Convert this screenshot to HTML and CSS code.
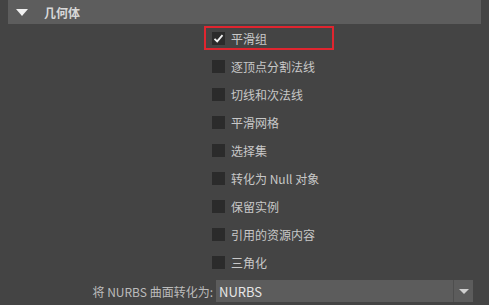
FILE: index.html
```html
<!DOCTYPE html>
<html lang="zh">
<head>
    <meta charset="UTF-8">
    <title>几何体</title>
    <link rel="stylesheet" href="styles.css">
</head>
<body>
    <div class="panel">
        <div class="section-header">
            <span class="arrow"></span>
            <span class="section-title">几何体</span>
        </div>

        <div class="options">
            <div class="option highlighted">
                <span class="checkbox checked">
                    <svg width="11" height="11" viewBox="0 0 11 11"><path d="M1.5 5.8 L4.2 8.4 L9.5 2.2" fill="none" stroke="#f2f2f2" stroke-width="1.8"/></svg>
                </span>
                <span class="label">平滑组</span>
            </div>
            <div class="option"><span class="checkbox"></span><span class="label">逐顶点分割法线</span></div>
            <div class="option"><span class="checkbox"></span><span class="label">切线和次法线</span></div>
            <div class="option"><span class="checkbox"></span><span class="label">平滑网格</span></div>
            <div class="option"><span class="checkbox"></span><span class="label">选择集</span></div>
            <div class="option"><span class="checkbox"></span><span class="label">转化为 Null 对象</span></div>
            <div class="option"><span class="checkbox"></span><span class="label">保留实例</span></div>
            <div class="option"><span class="checkbox"></span><span class="label">引用的资源内容</span></div>
            <div class="option"><span class="checkbox"></span><span class="label">三角化</span></div>
        </div>

        <div class="select-row">
            <span class="select-label">将 NURBS 曲面转化为:</span>
            <div class="select">
                <span class="select-value">NURBS</span>
                <span class="select-btn"><span class="select-arrow"></span></span>
            </div>
        </div>
    </div>
</body>
</html>
```

FILE: styles.css
```css
* {
    margin: 0;
    padding: 0;
    box-sizing: border-box;
}
body {
    background-color: #444444;
    color: #c8c8c8;
    font-family: "Noto Sans CJK SC", "Noto Sans", sans-serif;
    font-size: 12px;
    width: 489px;
    height: 305px;
    overflow: hidden;
}
.panel {
    width: 481px;
}
.section-header {
    margin-left: 8px;
    height: 24px;
    background-color: #5d5d5d;
    display: flex;
    align-items: center;
}
.arrow {
    margin-left: 8px;
    width: 0;
    height: 0;
    border-left: 6px solid transparent;
    border-right: 6px solid transparent;
    border-top: 7px solid #f0f0f0;
}
.section-title {
    margin-left: 16px;
    font-weight: bold;
    color: #d8d8d8;
}
.options {
    display: flex;
    flex-direction: column;
    align-items: flex-start;
    padding-left: 204px;
}
.option {
    height: 28px;
    display: flex;
    align-items: center;
    padding-left: 8px;
    border: 2px solid transparent;
    width: 130px;
}
.option.highlighted {
    border-color: #e0252f;
    height: 24px;
    margin: 2px 0;
}
.checkbox {
    width: 13px;
    height: 13px;
    background-color: #2b2b2b;
    display: flex;
    align-items: center;
    justify-content: center;
    margin-left: -2px;
}
.label {
    margin-left: 6px;
    white-space: nowrap;
}
.select-row {
    margin-top: 4px;
    display: flex;
    align-items: center;
    height: 22px;
}
.select-label {
    width: 213px;
    text-align: right;
    color: #bcbcbc;
}
.select {
    margin-left: 3px;
    width: 257px;
    height: 22px;
    background-color: #5c5c5c;
    display: flex;
    align-items: center;
}
.select-value {
    flex: 1;
    padding-left: 3px;
    color: #e6e6e6;
    font-size: 13px;
}
.select-btn {
    width: 20px;
    height: 22px;
    border-left: 1px solid #4e4e4e;
    display: flex;
    align-items: center;
    justify-content: center;
}
.select-arrow {
    width: 0;
    height: 0;
    border-left: 5px solid transparent;
    border-right: 5px solid transparent;
    border-top: 5px solid #d0d0d0;
}
```
